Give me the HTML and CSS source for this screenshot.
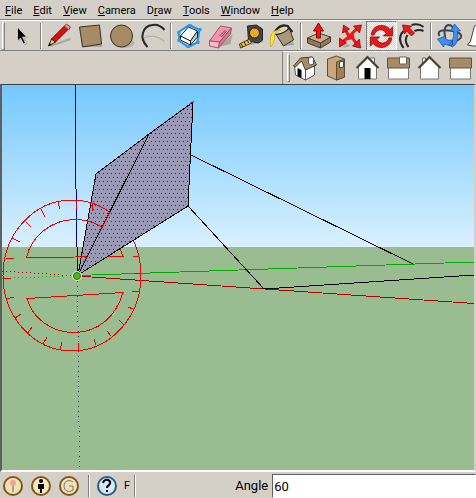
FILE: index.html
```html
<!DOCTYPE html>
<html lang="en">
<head>
<meta charset="utf-8">
<title>Model</title>
<link rel="stylesheet" href="styles.css">
</head>
<body>
<nav class="menu">
<a href="#"><u>F</u>ile</a><a href="#"><u>E</u>dit</a><a href="#"><u>V</u>iew</a><a href="#"><u>C</u>amera</a><a href="#">D<u>r</u>aw</a><a href="#"><u>T</u>ools</a><a href="#"><u>W</u>indow</a><a href="#"><u>H</u>elp</a>
</nav>
<div class="toolbar tools">
<span class="grip"></span>
<button class="select" aria-label="Select"><svg viewBox="0 0 30 30"><path d="M12 7v14l3-3 3 6 3-1-3-6h4z" fill="#888" opacity=".5"/><path d="M11 6v14l3-3 3 6 2-1-3-6h4z" fill="#000" stroke="#fff" stroke-width=".6"/></svg></button>
<span class="sep"></span>
<button aria-label="Line"><svg viewBox="0 0 30 30"><path d="M6 25l20-7" stroke="#aaa69e" stroke-width="2"/><path d="M4 25l3-7 4 3z" fill="#f4cf65" stroke="#222"/><path d="M7 18L20 5l4 3-13 13z" fill="#e60b0b" stroke="#5b0909"/><path d="M20 5l2-2 4 3-2 3z" fill="#f48eac" stroke="#754150"/><path d="M4 25l1-3 2 2z"/></svg></button>
<button aria-label="Rectangle"><svg viewBox="0 0 30 30"><path d="M8 26h19l-1-4z" fill="#aaa69e"/><path d="M4 6l20-2 2 19-19 3z" fill="#a58b66" stroke="#38332a"/></svg></button>
<button aria-label="Circle"><svg viewBox="0 0 30 30"><ellipse cx="17" cy="22" rx="11" ry="5" fill="#b5b0a8"/><circle cx="15" cy="15" r="11" fill="#a58b66" stroke="#38332a"/></svg></button>
<button aria-label="Arc"><svg viewBox="0 0 30 30"><path d="M6 17Q16 12 27 20M6 17l4 9" fill="none" stroke="#aaa69e"/><path d="M10 26C1 17 5 5 15 4q7-1 12 5" fill="none" stroke="#25272a" stroke-width="2"/></svg></button>
<span class="sep"></span>
<button aria-label="Make component"><svg viewBox="0 0 30 30"><path d="M4 11l11-7 10 5-2 12-9 5-9-6z" fill="#d6e9f6" stroke="#1697f0" stroke-width="2"/><path d="M6 15l8-9 9 4-7 10z" fill="#fff" stroke="#222"/><path d="M6 15l10 5v4L6 19z" fill="#fff" stroke="#222"/><path d="M16 20l7-10v6l-7 8z" fill="#ccc" stroke="#222"/><path d="M3 10h3v3H3zM14 3h3v3h-3zM24 7h3v3h-3zM22 20h3v3h-3zM12 24h3v3h-3zM3 18h3v3H3z" fill="#249df0"/></svg></button>
<button aria-label="Eraser"><svg viewBox="0 0 30 30"><path d="M13 26l12-3 2-10z" fill="#aaa69e"/><path d="M4 20L15 5l11 2-12 14z" fill="#f494ad" stroke="#a75569"/><path d="M4 20l10 1-1 6-9-2z" fill="#ffb9c9" stroke="#a75569"/><path d="M14 21L26 7l-1 6-12 14z" fill="#d9758e" stroke="#a75569"/><path d="M14 15l6-6m-4 7l5-6" stroke="#874358"/></svg></button>
<button aria-label="Tape measure"><svg viewBox="0 0 30 30"><path d="M13 24l14-3-2-5z" fill="#aaa69e"/><path d="M11 5l9-1 6 4v11l-4 3-10-2z" fill="#444649" stroke="#222"/><circle cx="18" cy="12" r="5" fill="#f0a91b" stroke="#222"/><path d="M13 18L3 23l1 4 11-5z" fill="#f5c52d" stroke="#483c15"/><path d="M5 23l1 3m2-5l1 3m2-5l1 3" stroke="#222"/></svg></button>
<button aria-label="Paint bucket"><svg viewBox="0 0 30 30"><path d="M15 25l12-1-3-6z" fill="#aaa69e"/><path d="M7 11L21 5l5 14-10 6z" fill="#a89a78" stroke="#39362f"/><ellipse cx="14" cy="9" rx="8" ry="3" transform="rotate(-25 14 9)" fill="#ddd5b8" stroke="#222"/><path d="M8 10Q13 2 20 5l5 6" fill="none" stroke="#222" stroke-width="2"/><path d="M13 9Q6 10 7 18l-2 6-2 2 0-10q2-8 10-7z" fill="#ffe329" stroke="#ae920e" stroke-width=".5"/></svg></button>
<span class="sep"></span>
<button aria-label="Push pull"><svg viewBox="0 0 30 30"><path d="M3 17l11-5 12 4-10 6z" fill="#cdb08a" stroke="#453a2e"/><path d="M3 17l13 5v5L3 22zM16 22l10-6v5l-10 6z" fill="#92795a" stroke="#453a2e"/><path d="M12 17v-7H9l5-8 5 8h-3v7z" fill="#f01414" stroke="#790909"/></svg></button>
<button aria-label="Move"><svg viewBox="0 0 30 30"><path d="M8 26l6-2M20 26h6" stroke="#aaa69e" stroke-width="2"/><path d="M13 14L9 8M16 13l5-5M12 17l-5 4M17 17l4 6" stroke="#ee1717" stroke-width="3"/><path d="M8 4l6 4-7 4zM18 5l8-1-2 8zM4 17l7 5-7 4zM24 18l1 9-8-2z" fill="#ee1717" stroke="#6e0909" stroke-width=".7"/><path d="M11 13l7-1 1 6-7 1z" fill="#ee1717"/></svg></button>
<button class="on" aria-label="Rotate"><svg viewBox="0 0 30 30"><path d="M4 14C5 2 19 1 24 8l3-3v10H17l3-3C16 6 9 8 7 14z" fill="#ed1717" stroke="#740909" stroke-width=".8"/><path d="M26 17c-1 12-15 13-20 6l-3 3V16h10l-3 3c4 6 11 4 13-2z" fill="#ed1717" stroke="#740909" stroke-width=".8"/></svg></button>
<button aria-label="Offset"><svg viewBox="0 0 30 30"><path d="M6 27Q-1 17 6 10M11 26q-5-6-1-12m4-10q7-2 12 2M17 10q5-2 9 0" fill="none" stroke="#24272a" stroke-width="2"/><path d="M5 4l9 1-2 2 5 5-3 3-5-5-2 3z" fill="#ef1717" stroke="#740909" stroke-width=".7"/></svg></button>
<span class="sep"></span>
<button aria-label="Orbit"><svg viewBox="0 0 30 30"><path d="M5 15C1 8 12 9 18 10q11 2 8 7-3 4-11 3" fill="none" stroke="#3f454a" stroke-width="2"/><path d="M11 18Q8 5 14 4q4 0 5 5" fill="none" stroke="#3f454a" stroke-width="2"/><path d="M20 3l6 7-3 0q2 12-5 16l-4-2q6-4 5-14h-3zM3 18l8-3v3q3 2 7 1v5q-5 1-8-1l-1 3z" fill="#3d8ff5" stroke="#1c4e94" stroke-width=".7"/></svg></button>
<button aria-label="Pan"><svg viewBox="0 0 30 30"><path d="M2 24l3-4 4-15 3-1 1 3 2-5 4 1v5l3-4 3 1v20H8z" fill="#fff" stroke="#444"/></svg></button>
</div>
<div class="toolbar views">
<span class="grip"></span>
<button aria-label="Iso"><svg viewBox="0 0 30 30"><path d="M4 13l8-6 3 9v11L5 22z" fill="#fff" stroke="#555"/><path d="M15 17l9-6v11l-9 5z" fill="#fff" stroke="#555"/><path d="M7 15l4 2v8l-4-2z"/><path d="M3 13l7-8 12-1 4 8-11 5-4-9-6 6z" fill="#a58b66" stroke="#49402f"/><path d="M18 5l3-1 2 1v6l-3 1-2-2z" fill="#fff" stroke="#555"/></svg></button>
<button aria-label="Top"><svg viewBox="0 0 30 30"><path d="M6 6l9-3 8 3v18l-8 3-9-4z" fill="#c8a77b" stroke="#5d4c34"/><path d="M15 9l8-3v18l-8 3z" fill="#a58053" stroke="#5d4c34"/><path d="M18 9l4-1v6l-4 1z" fill="#fff" stroke="#444"/></svg></button>
<button aria-label="Front"><svg viewBox="0 0 30 30"><path d="M18 5h4v7" fill="#fff" stroke="#666"/><path d="M6 14l9-9 9 9v12H6z" fill="#fff" stroke="#777"/><path d="M4 15L15 4l11 11" fill="none" stroke="#4b4133" stroke-width="2"/><path d="M12 15h6v11h-6z"/></svg></button>
<button aria-label="Right"><svg viewBox="0 0 30 30"><path d="M5 14h20v12H5z" fill="#fff" stroke="#777"/><path d="M4 5h22v10H4z" fill="#a58b66" stroke="#655237"/><path d="M16 4h7v7h-7z" fill="#fff" stroke="#666"/></svg></button>
<button aria-label="Back"><svg viewBox="0 0 30 30"><path d="M8 12V5h3v5" fill="#fff" stroke="#666"/><path d="M6 14l9-9 9 9v12H6z" fill="#fff" stroke="#777"/><path d="M4 15L15 4l11 11" fill="none" stroke="#4b4133" stroke-width="2"/></svg></button>
<button aria-label="Left"><svg viewBox="0 0 30 30"><path d="M5 14h20v12H5z" fill="#fff" stroke="#777"/><path d="M4 5h22v10H4z" fill="#a58b66" stroke="#655237"/></svg></button>
</div>
<main class="canvas">
<svg viewBox="2 85 472 385" preserveAspectRatio="xMinYMin slice" shape-rendering="crispEdges" fill="none">
<defs>
<linearGradient id="sky" x2="0" y2="1"><stop stop-color="#74c8fe"/><stop offset="1" stop-color="#daf0ff"/></linearGradient>
<pattern id="dots" width="4" height="8" patternUnits="userSpaceOnUse"><path d="M0 0h4v8H0z" fill="#9a9ab6"/><path d="M1 1h1v1H1zM3 5h1v1H3z" fill="#2020a8" shape-rendering="auto"/></pattern>
</defs>
<path d="M2 85h472v162H2z" fill="url(#sky)"/><path d="M2 247h472v223H2z" fill="#9abc91"/>
<path d="M75.500 85v75l2 115" stroke="#0000a8"/>
<path d="M77.500 276l2 194" stroke="#000060" stroke-dasharray="1 4"/>
<path d="M2 271l75 5" stroke="#b00000" stroke-dasharray="1 3"/><path d="M2 278.500l75-3" stroke="#00a800" stroke-dasharray="1 3"/>
<path d="M77 276l397 27.500" stroke="#b40000"/><path d="M77 275.500L474 262" stroke="#00ac00"/>
<path d="M191 155l222 109M188 206l76 83 210-14" stroke="#000"/>
<path d="M78 275l18-101 53-40z" fill="url(#dots)" stroke="#000"/>
<g stroke="#f00000">
<ellipse cx="72" cy="275.500" rx="69" ry="75.500"/>
<path d="M26.500 257.500C31 237 51 219.500 75 219.500s42 15 48 37zM27 298.500C32 317 50 332.500 74 332.500s42-16 49-40z"/>
<path d="M76.500 203v6M58 202l2 7M41 209l4 8M26 222l5 5M12 238l8 4M6 258l8 1M3 278.500h8M6 299l8-2M15 318l6-4M27 334l5-7M43 344l4-7M60 350l2-8M78.500 350v-7M96 345l-2-6M111 336l-4-5M124 325l-5-5M133 309l-5-2M139 292l-7-1M141 273.500h-7M138 256l-5 1M93 204l-1 7"/>
</g>
<path d="M78 275l71-141 44-32-5 104z" fill="url(#dots)" stroke="#000"/>
<path d="M110 212l-8 16" stroke="#f00000"/>
<circle cx="77" cy="276" r="4" fill="#3dac0e" stroke="#d8e8c8" stroke-width="2" shape-rendering="auto"/><circle cx="77" cy="276" r="3.500" fill="#50b51b" stroke="#287708" shape-rendering="auto"/>
</svg>
</main>
<footer class="status">
<button aria-label="Geo-location"><svg viewBox="0 0 22 22"><circle cx="11" cy="11" r="9" fill="#efe2b9" stroke="#83571a" stroke-width="2"/><circle cx="11" cy="8" r="3" fill="#f6a291"/><path d="M11 11v6" stroke="#a9a18c" stroke-width="2"/></svg></button>
<button aria-label="Credits"><svg viewBox="0 0 22 22"><circle cx="11" cy="11" r="9" fill="#f5e8be" stroke="#83571a" stroke-width="2"/><circle cx="11" cy="6" r="2"/><path d="M8 9h6v5h-2v4h-2v-4H8z"/></svg></button>
<button aria-label="Sign in"><svg viewBox="0 0 22 22"><circle cx="11" cy="11" r="9" fill="#efe2b9" stroke="#83571a" stroke-width="2"/><path d="M15 7C11 4 6 6 6 11s5 7 9 4v-4h-4" fill="none" stroke="#77736a"/></svg></button>
<span class="sep"></span>
<button class="help" aria-label="Help"><svg viewBox="0 0 22 22"><circle cx="11" cy="11" r="9" fill="#d5e9fc" stroke="#285f80" stroke-width="2"/><path d="M7 8q1-4 5-3 4 2 1 5-2 1-2 3" fill="none" stroke="#000" stroke-width="2"/><path d="M10 15h2v2h-2z"/></svg></button>
<span class="hint">F</span>
<span class="sep"></span>
<label for="angle">Angle</label><input id="angle" value="60">
</footer>
</body>
</html>
```
FILE: styles.css
```css
* { box-sizing: border-box; }
body {
  margin: 0;
  height: 100vh;
  display: flex;
  flex-direction: column;
  overflow: hidden;
  background: #d4d0c8;
  color: #000;
  font: 11px/20px Roboto, "DejaVu Sans Condensed", sans-serif;
}
svg { display: block; width: 100%; height: 100%; }
button { padding: 0; border: 0; background: none; flex: none; }
.menu { display: flex; flex: none; gap: 11px; height: 20px; padding: 1px 5px 0; }
.menu a { color: inherit; text-decoration: none; }
.toolbar { display: flex; flex: none; align-items: center; border-top: 1px solid #fff; box-shadow: 0 -1px #808080; }
.tools { height: 31px; padding-left: 2px; border-bottom: 1px solid #808080; }
.tools button { width: 31px; height: 30px; }
.tools .select { width: 33px; }
.tools .on { border: 1px solid; border-color: #808080 #fff #fff #808080; background: repeating-conic-gradient(#fff 0 25%, #d4d0c8 0 50%) 0 0 / 2px 2px; }
.grip { flex: none; width: 3px; height: 28px; border: 1px solid; border-color: #fff #808080 #808080 #fff; }
.sep { flex: none; width: 2px; height: 26px; margin: 0 2px; border-left: 1px solid #808080; border-right: 1px solid #fff; }
.views { height: 33px; margin-left: 282px; padding-left: 4px; border-left: 1px solid #808080; }
.views button { width: 31px; height: 30px; }
.canvas { flex: 1; min-height: 0; border: solid; border-width: 1px 2px 2px; border-color: #404040 #d4d0c8 #fff #606060; }
.status { display: flex; flex: none; align-items: center; height: 26px; padding: 2px 0 0 2px; }
.status button { width: 22px; height: 22px; margin-right: 6px; }
.status .sep { height: 22px; margin: 0 6px 0 2px; }
.status .help { margin-right: 6px; }
.hint { margin-right: 2px; }
.status label { margin-left: auto; font-size: 13px; }
.status input { width: 43%; height: 24px; margin-left: 4px; padding: 0 1px; border: 1px solid; border-color: #606060 #fff #fff #606060; background: #fff; font: inherit; font-size: 13px; }
```
